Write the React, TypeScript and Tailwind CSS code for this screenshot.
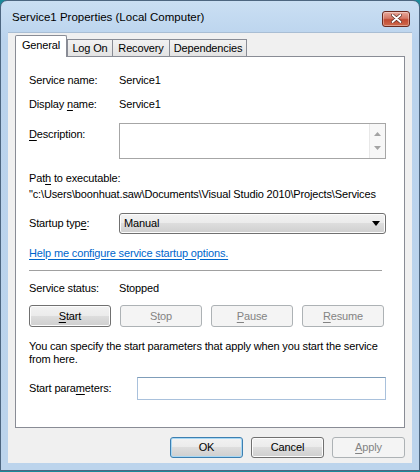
import React from "react";

function U({ children }: { children: React.ReactNode }) {
  return <span className="underline underline-offset-2">{children}</span>;
}

function Btn({
  children,
  disabled,
  primary,
  className = "",
}: {
  children: React.ReactNode;
  disabled?: boolean;
  primary?: boolean;
  className?: string;
}) {
  if (disabled) {
    return (
      <div
        className={`flex items-center justify-center rounded-[3px] border border-[#adb2b5] bg-[#f4f4f4] text-[#838383] ${className}`}
      >
        {children}
      </div>
    );
  }
  return (
    <div
      className={`flex items-center justify-center rounded-[3px] border ${
        primary ? "border-[#3c7fb1] shadow-[inset_0_0_0_1px_#a8d8f4]" : "border-[#707070] shadow-[inset_0_0_0_1px_#fcfcfc]"
      } bg-[linear-gradient(#f2f2f2_0%,#ebebeb_50%,#dddddd_50%,#cfcfcf_100%)] text-black ${className}`}
    >
      {children}
    </div>
  );
}

export default function App() {
  return (
    <div className="w-[420px] h-[472px] font-['Liberation_Sans',Arial,sans-serif] text-[11px] tracking-[-0.15px] text-black bg-[#1b8a9a]">
      <div className="w-[420px] h-[471px] flex flex-col rounded-t-[7px] border border-[#4d6680] bg-[linear-gradient(#cadff3,#bad3ed_40px,#bcd4ec)]">
        {/* title bar */}
        <div className="h-[31px] flex items-center pl-[11px] pr-[9px]">
          <span className="text-[11.5px] tracking-normal leading-none mt-[3px]">Service1 Properties (Local Computer)</span>
          <div className="ml-auto mt-[4px] w-[28px] h-[16px] rounded-[3px] border border-[#6a2a20] bg-[linear-gradient(#e9a99b,#d47866_45%,#c14a32_55%,#cf6a4c)] shadow-[inset_0_0_0_1px_rgba(255,255,255,0.35)] flex items-center justify-center">
            <svg width="11" height="9" viewBox="0 0 11 9">
              <path d="M1.5 1 L9.5 8 M9.5 1 L1.5 8" stroke="#5a2a22" strokeWidth="3.2" strokeLinecap="round" />
              <path d="M1.5 1 L9.5 8 M9.5 1 L1.5 8" stroke="#ffffff" strokeWidth="1.8" strokeLinecap="round" />
            </svg>
          </div>
        </div>

        {/* client area */}
        <div className="mx-[7px] h-[431px] bg-[#f0f0f0] flex flex-col border-t border-[#a9bed4]">
          {/* tabs */}
          <div className="pl-[7px] pt-[2px] flex items-end h-[24px] -mb-px relative z-10">
            <div className="w-[52px] h-[22px] bg-white border-x border-t border-[#898c95] rounded-t-[2px] flex items-center justify-center pb-[2px]">
              General
            </div>
            <div className="w-[46px] h-[18px] bg-[linear-gradient(#f2f2f2,#e3e3e3)] border border-[#898c95] flex items-center justify-center">
              Log On
            </div>
            <div className="w-[57px] h-[18px] bg-[linear-gradient(#f2f2f2,#e3e3e3)] border border-l-0 border-[#898c95] flex items-center justify-center">
              Recovery
            </div>
            <div className="w-[77px] h-[18px] bg-[linear-gradient(#f2f2f2,#e3e3e3)] border border-l-0 border-[#898c95] flex items-center justify-center">
              Dependencies
            </div>
          </div>

          {/* tab panel */}
          <div className="ml-[7px] w-[390px] h-[372px] bg-white border border-[#898c95] pl-[13px] pr-[18px] flex flex-col">
            <div className="mt-[15px] h-[16px] flex items-center">
              <span className="w-[90px]">Service name:</span>
              <span>Service1</span>
            </div>
            <div className="mt-[8px] h-[16px] flex items-center">
              <span className="w-[90px]">
                Display <U>n</U>ame:
              </span>
              <span>Service1</span>
            </div>
            <div className="mt-[11px] flex">
              <span className="w-[90px] pt-[3px] leading-[16px]">
                <U>D</U>escription:
              </span>
              <div className="flex-1 h-[36px] border border-[#a6a6a6] bg-white flex justify-end">
                <div className="w-[16px] h-[34px] bg-[#f7f7f7] border-l border-[#e8e8e8] flex flex-col items-center justify-around py-[3px]">
                  <svg width="7" height="4" viewBox="0 0 7 4">
                    <path d="M0 4 L3.5 0 L7 4 Z" fill="#a3a3a3" />
                  </svg>
                  <svg width="7" height="4" viewBox="0 0 7 4">
                    <path d="M0 0 L3.5 4 L7 0 Z" fill="#a3a3a3" />
                  </svg>
                </div>
              </div>
            </div>
            <div className="mt-[11px] h-[16px] flex items-center">
              Pat<U>h</U>&nbsp;to executable:
            </div>
            <div className="h-[16px] flex items-center whitespace-nowrap">
              "c:\Users\boonhuat.saw\Documents\Visual Studio 2010\Projects\Services
            </div>
            <div className="mt-[11px] flex items-center">
              <span className="w-[90px]">
                Startup typ<U>e</U>:
              </span>
              <div className="flex-1 h-[21px] rounded-[3px] border border-[#707070] bg-[linear-gradient(#f2f2f2_0%,#ebebeb_50%,#dddddd_50%,#cfcfcf_100%)] shadow-[inset_0_0_0_1px_#fcfcfc] flex items-center pl-[4px] pr-[5px]">
                <span>Manual</span>
                <svg className="ml-auto" width="8" height="5" viewBox="0 0 8 5">
                  <path d="M0 0 L8 0 L4 5 Z" fill="#000" />
                </svg>
              </div>
            </div>
            <div className="mt-[11px] h-[16px] flex items-center">
              <span className="text-[#0066cc] underline underline-offset-2">Help me configure service startup options.</span>
            </div>
            <div className="mt-[9px] w-[353px] h-px bg-[#a0a0a0]" />
            <div className="mt-[9px] h-[16px] flex items-center">
              <span className="w-[90px]">Service status:</span>
              <span>Stopped</span>
            </div>
            <div className="mt-[9px] flex gap-[9px]">
              <Btn className="w-[82px] h-[22px]">
                <U>S</U>tart
              </Btn>
              <Btn disabled className="w-[82px] h-[22px]">
                S<U>t</U>op
              </Btn>
              <Btn disabled className="w-[82px] h-[22px]">
                <U>P</U>ause
              </Btn>
              <Btn disabled className="w-[82px] h-[22px]">
                <U>R</U>esume
              </Btn>
            </div>
            <div className="mt-[13px] leading-[13px] whitespace-nowrap">
              You can specify the start parameters that apply when you start the service
              <br />
              from here.
            </div>
            <div className="mt-[11px] flex items-center">
              <span className="w-[108px]">
                Start para<U>m</U>eters:
              </span>
              <div className="flex-1 h-[23px] border border-[#a9c1dc] border-t-[#7f9db9] bg-white" />
            </div>
          </div>

          {/* bottom buttons */}
          <div className="mt-[9px] pr-[7px] flex justify-end gap-[8px]">
            <Btn primary className="w-[73px] h-[21px]">
              OK
            </Btn>
            <Btn className="w-[73px] h-[21px]">Cancel</Btn>
            <Btn disabled className="w-[73px] h-[21px]">
              <U>A</U>pply
            </Btn>
          </div>
        </div>
      </div>
    </div>
  );
}
